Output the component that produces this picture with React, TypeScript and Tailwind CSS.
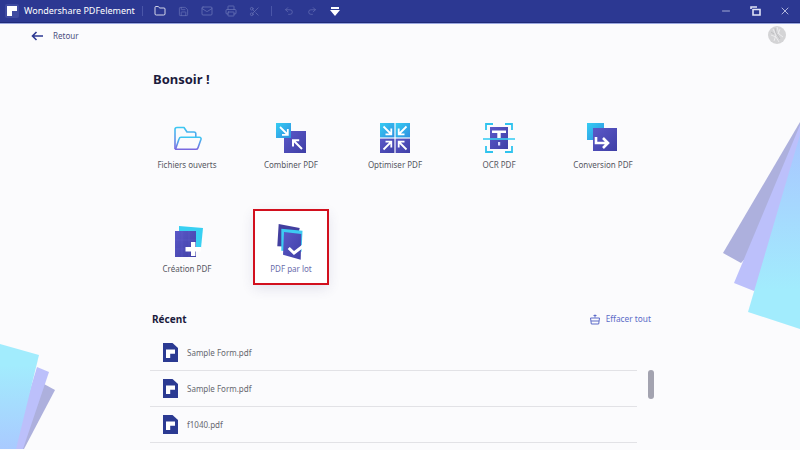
import { Folder, Mail, Minus, Printer, Redo2, Save, Scissors, Undo2, X } from 'lucide-react';
import type { ReactNode } from 'react';

const font = { fontFamily: '"Noto Sans", "Open Sans", sans-serif' };

function Gradients() {
  return (
    <svg width="0" height="0" className="absolute">
      <defs>
        <linearGradient id="cyanBlue" x1="0" y1="0" x2="1" y2="1">
          <stop offset="0" stopColor="#35cdf3" />
          <stop offset="1" stopColor="#2f8fe0" />
        </linearGradient>
        <linearGradient id="indigo" x1="0" y1="0" x2="1" y2="1">
          <stop offset="0" stopColor="#5b58c8" />
          <stop offset="1" stopColor="#3f3fa6" />
        </linearGradient>
        <linearGradient id="folderStroke" x1="0" y1="0" x2="0" y2="1">
          <stop offset="0" stopColor="#3cc7f2" />
          <stop offset="1" stopColor="#7a68e0" />
        </linearGradient>
        <linearGradient id="paperRight" x1="0" y1="1" x2="0" y2="0">
          <stop offset="0.2" stopColor="#a2ecfd" />
          <stop offset="1" stopColor="#a9c6ff" />
        </linearGradient>
        <linearGradient id="paperLeft" x1="0" y1="0" x2="0" y2="1">
          <stop offset="0.2" stopColor="#a2ecfd" />
          <stop offset="1" stopColor="#a9caff" />
        </linearGradient>
      </defs>
    </svg>
  );
}

function FolderIcon() {
  return (
    <svg width="32" height="32" viewBox="0 0 32 32" fill="none" stroke="url(#folderStroke)" strokeWidth="1.6" strokeLinejoin="round">
      <path d="M4 27V7.500C4 6.200 4.800 5.500 6 5.500h7l3 4.500h7c1.200 0 1.800.7 1.800 1.800V15" />
      <path d="M4.500 27.300L8 17c.3-1 1-1.700 2-1.700h18.500c1.200 0 1.800.9 1.500 1.900l-3 8.500c-.3 1-1 1.600-2 1.600z" />
    </svg>
  );
}

function CombineIcon() {
  return (
    <svg width="32" height="32" viewBox="0 0 32 32">
      <rect x="9" y="9" width="22" height="22" fill="url(#indigo)" />
      <rect x="1" y="1" width="15" height="15" fill="url(#cyanBlue)" />
      <path d="M5 5l7.500 7.500M12.800 7v5.800H7" stroke="#fff" strokeWidth="1.8" fill="none" />
      <path d="M27 27l-8.500-8.500M18 24.500v-6.200h6.200" stroke="#fff" strokeWidth="2" fill="none" />
    </svg>
  );
}

function OptimizeIcon() {
  return (
    <svg width="32" height="32" viewBox="0 0 32 32">
      <rect x="1" y="1" width="14.400" height="14.400" fill="url(#cyanBlue)" />
      <rect x="16.600" y="1" width="14.400" height="14.400" fill="url(#cyanBlue)" />
      <rect x="1" y="16.600" width="14.400" height="14.400" fill="url(#indigo)" />
      <rect x="16.600" y="16.600" width="14.400" height="14.400" fill="url(#indigo)" />
      <g stroke="#fff" strokeWidth="1.800" fill="none">
        <path d="M4.500 4.500l7.500 7.500M12.300 6.500v5.800H6.500" />
        <path d="M27.500 4.500L20 12M19.700 6.500v5.800h5.800" />
        <path d="M12 20l-7.500 7.500M6.500 19.700h5.800v5.800" />
        <path d="M20 20l7.500 7.500M25.500 19.700h-5.800v5.800" />
      </g>
    </svg>
  );
}

function OcrIcon() {
  return (
    <svg width="32" height="32" viewBox="0 0 32 32">
      <rect x="7" y="5" width="18" height="22" fill="url(#indigo)" />
      <path d="M3 8V2h7M22 2h7v6M3 24v6h7M22 30h7v-6" stroke="#2fc3ee" strokeWidth="1.800" fill="none" />
      <path d="M0 17h32" stroke="#3ccdf3" strokeWidth="1.600" />
      <path d="M9 8.500h14v2.600h-5.300V16h-3.400v-4.900H9z" fill="#fff" />
      <rect x="15" y="20" width="2.200" height="3.500" fill="#d9dcff" />
    </svg>
  );
}

function ConvertIcon() {
  return (
    <svg width="32" height="32" viewBox="0 0 32 32">
      <rect x="0" y="1" width="17" height="17" fill="url(#cyanBlue)" />
      <rect x="6" y="6" width="24" height="23" fill="url(#indigo)" />
      <path d="M9 15v6h11M16 16l5 5-5 5" stroke="#fff" strokeWidth="2.600" fill="none" />
    </svg>
  );
}

function CreateIcon() {
  return (
    <svg width="32" height="32" viewBox="0 0 32 32">
      <path d="M8 0l24 2-2 20-22-2z" fill="#38d0f2" />
      <rect x="4" y="5" width="21" height="26" fill="url(#indigo)" />
      <path d="M11 5v26M18 5v26M4 14h21M4 23h21" stroke="#6a68d2" strokeWidth=".5" opacity=".6" />
      <path d="M20 16h4.400v5H30v4.400h-5.600V30H20v-4.600h-5.500V21H20z" fill="#fff" />
    </svg>
  );
}

function BatchIcon() {
  return (
    <svg width="32" height="32" viewBox="0 0 32 32" className="overflow-visible">
      <path d="M3.700-2l21 4-4 19-18.400-.700z" fill="#433f9f" />
      <path d="M6.300 2.700L27.500 4.700l-1 21-20.200-1z" fill="#3ccbf2" />
      <path d="M9 6l17.300 2-.600 25.700L8 28.700z" fill="url(#indigo)" />
      <path d="M13.700 22l5.300 5 13-10" stroke="#fff" strokeWidth="3" fill="none" />
    </svg>
  );
}

function FileIcon() {
  return (
    <svg width="15" height="19" viewBox="0 0 15 19" className="shrink-0">
      <path d="M0 0h9.500L15 5v14H0z" fill="#2b3a92" />
      <path d="M3 6.500h9v4.200H7.200V15H3z" fill="#fff" />
    </svg>
  );
}

function ActionCell({ icon, label, active }: { icon: ReactNode; label: string; active?: boolean }) {
  return (
    <div
      className={
        active
          ? 'flex h-[74px] flex-col items-center bg-white pt-4 shadow-[0_4px_12px_rgba(60,60,120,0.14)] outline-2 -outline-offset-1 outline-[#d2101e]'
          : 'flex h-[74px] flex-col items-center pt-4'
      }
    >
      {icon}
      <span
        className={
          active
            ? 'mt-1 text-[8px] leading-[13px] whitespace-nowrap text-[#6a6cab]'
            : 'mt-1 text-[8px] leading-[13px] whitespace-nowrap text-[#55565f]'
        }
      >
        {label}
      </span>
    </div>
  );
}

function RecentRow({ name }: { name: string }) {
  return (
    <div className="flex h-9 items-center gap-[9px] border-b-[1.5px] border-[#e2e2e6] pl-[13px]">
      <FileIcon />
      <span className="text-[8px] text-[#66676f]">{name}</span>
    </div>
  );
}

export default function App() {
  return (
    <div style={font} className="relative flex h-[450px] w-[800px] flex-col overflow-hidden bg-[#fbfbfd]">
      <Gradients />

      {/* decoration papers */}
      <svg width="800" height="450" className="absolute inset-0">
        <polygon points="800,122 723,253 741,263 800,200" fill="#adb0dd" />
        <polygon points="800,125 734,283 754,291 800,260" fill="#bcc0fb" />
        <polygon points="800,135 748,312 800,329" fill="url(#paperRight)" />
        <polygon points="44,384 55,390 24,449 15,449" fill="#adb0dd" />
        <polygon points="37,367 49,372 23,449 12,449" fill="#bcc0fb" />
        <polygon points="0,344 39,355 16,449 0,449" fill="url(#paperLeft)" />
      </svg>

      <header className="relative flex h-[23px] items-center border-b border-[#1f2a78] bg-[#2c3892] text-white">
        <div className="ml-[5px] flex size-[14px] items-center justify-center rounded-[2px] bg-[#3f4ba0]">
          <svg width="10" height="10" viewBox="0 0 10 10">
            <path d="M0 0h10v5H5v5H0z" fill="#fff" />
          </svg>
        </div>
        <span className="ml-[5px] w-[114px] text-[9px] whitespace-nowrap">Wondershare PDFelement</span>
        <div className="ml-[4px] h-[10px] w-px bg-[#4a56a8]" />
        <div className="ml-[11px] flex items-center gap-[12px]">
          <Folder size={12} strokeWidth={1.6} color="#fff" />
          <Save size={11} strokeWidth={1.5} color="#6b75b8" />
          <Mail size={12} strokeWidth={1.5} color="#6b75b8" />
          <Printer size={12} strokeWidth={1.5} color="#6b75b8" />
          <Scissors size={11} strokeWidth={1.5} color="#6b75b8" />
        </div>
        <div className="ml-[11px] h-[10px] w-px bg-[#4a56a8]" />
        <div className="ml-[12px] flex items-center gap-[13px]">
          <Undo2 size={10} strokeWidth={1.5} color="#6b75b8" />
          <Redo2 size={10} strokeWidth={1.5} color="#6b75b8" />
          <svg width="10" height="9" viewBox="0 0 10 9">
            <path d="M1 0h8v2H1zM0 3h10L5 9z" fill="#fff" />
          </svg>
        </div>
        <div className="ml-auto flex items-center gap-[18px] pr-[9px]">
          <Minus size={12} strokeWidth={1.5} color="#c9cdea" />
          <svg width="11" height="10" viewBox="0 0 11 10" fill="none" stroke="#dfe2f5" strokeWidth="1.600">
            <path d="M1 3V1h6M3 3.500h7V9H3z" />
          </svg>
          <X size={12} strokeWidth={1.5} color="#dfe2f5" />
        </div>
      </header>
      <div className="relative h-px bg-[#9aa6e0]" />

      <div className="relative flex h-6 items-center justify-between pr-[14px] pl-[31px]">
        <div className="flex items-center gap-[10px]">
          <svg width="12" height="10" viewBox="0 0 12 10" fill="none" stroke="#2c3892" strokeWidth="1.600">
            <path d="M12 5H1.500M5.500 1L1.500 5l4 4" />
          </svg>
          <span className="text-[8px] text-[#4b4f80]">Retour</span>
        </div>
        <svg width="18" height="18" viewBox="0 0 18 18" className="mb-[2px]">
          <circle cx="9" cy="9" r="9" fill="#d4d4d6" />
          <path d="M5 3l3 6-2 6M9 1l2 7 4 3M3 9l5 2 3 5M12 3l-2 5" stroke="#ececee" strokeWidth="1" fill="none" />
          <path d="M7 2l1 5 4 6M3 6l3 2" stroke="#b4b4b7" strokeWidth=".7" fill="none" />
        </svg>
      </div>

      <main className="relative ml-[150px] w-[501px]">
        <h1 className="mt-[21px] pl-[3px] text-[13px] leading-5 font-bold text-[#1b1b3d]">Bonsoir !</h1>

        <div className="mt-[17px] grid grid-cols-[repeat(5,74px)] gap-[30px]">
          <ActionCell icon={<FolderIcon />} label="Fichiers ouverts" />
          <ActionCell icon={<CombineIcon />} label="Combiner PDF" />
          <ActionCell icon={<OptimizeIcon />} label="Optimiser PDF" />
          <ActionCell icon={<OcrIcon />} label="OCR PDF" />
          <ActionCell icon={<ConvertIcon />} label="Conversion PDF" />
          <ActionCell icon={<CreateIcon />} label="Création PDF" />
          <ActionCell icon={<BatchIcon />} label="PDF par lot" active />
        </div>

        <div className="mt-[27px] flex h-4 items-center justify-between pl-[2px]">
          <h2 className="text-[10px] font-bold text-[#1b1b3d]">Récent</h2>
          <div className="flex items-center gap-[6px]">
            <svg width="10" height="11" viewBox="0 0 10 11" fill="none" stroke="#5c6bc8" strokeWidth="1">
              <path d="M5 .5v3M3.500 1.500h3M.5 4h9l-.8 6H1.300z" />
              <path d="M1 7h8" />
            </svg>
            <span className="text-[8.3px] text-[#5c6bc8]">Effacer tout</span>
          </div>
        </div>

        <div className="mt-2 flex">
          <div className="w-[487px] shrink-0">
            <RecentRow name="Sample Form.pdf" />
            <RecentRow name="Sample Form.pdf" />
            <RecentRow name="f1040.pdf" />
          </div>
          <div className="mt-[35px] ml-[11px] h-[29px] w-[6px] shrink-0 rounded-full bg-[#a3a3b0]" />
        </div>
      </main>
    </div>
  );
}
